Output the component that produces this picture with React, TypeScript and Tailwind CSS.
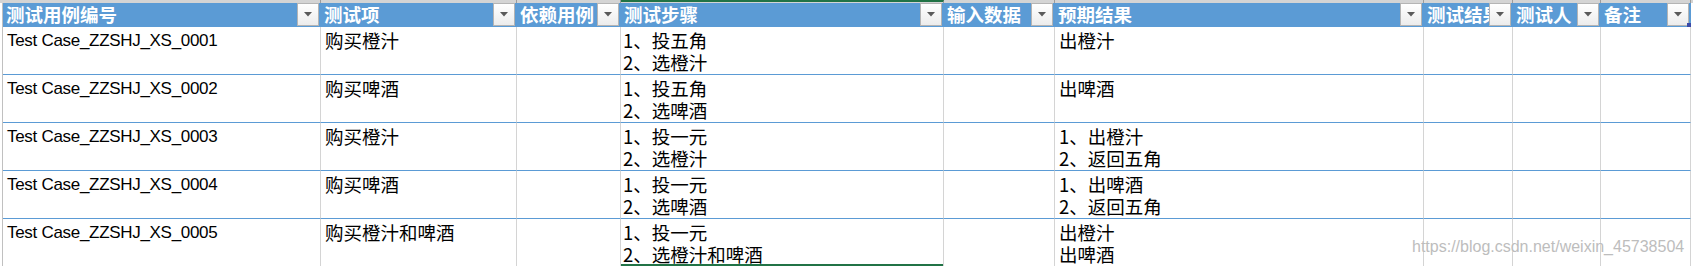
import React from "react";

const WIDTHS = [318, 196, 104, 323, 111, 369, 89, 88, 90];
const HEADERS = ["测试用例编号", "测试项", "依赖用例", "测试步骤", "输入数据", "预期结果", "测试结果", "测试人", "备注"];

type Row = { id: string; item: string; steps: string[]; expect: string[] };
const ROWS: Row[] = [
  { id: "Test Case_ZZSHJ_XS_0001", item: "购买橙汁", steps: ["1、投五角", "2、选橙汁"], expect: ["出橙汁"] },
  { id: "Test Case_ZZSHJ_XS_0002", item: "购买啤酒", steps: ["1、投五角", "2、选啤酒"], expect: ["出啤酒"] },
  { id: "Test Case_ZZSHJ_XS_0003", item: "购买橙汁", steps: ["1、投一元", "2、选橙汁"], expect: ["1、出橙汁", "2、返回五角"] },
  { id: "Test Case_ZZSHJ_XS_0004", item: "购买啤酒", steps: ["1、投一元", "2、选啤酒"], expect: ["1、出啤酒", "2、返回五角"] },
  { id: "Test Case_ZZSHJ_XS_0005", item: "购买橙汁和啤酒", steps: ["1、投一元", "2、选橙汁和啤酒"], expect: ["出橙汁", "出啤酒"] },
];

function FilterButton({ last }: { last?: boolean }) {
  return (
    <div className="relative z-10 shrink-0 w-[22px] h-[23px] mr-[2px] border border-[#b4b4b4] bg-gradient-to-b from-[#ffffff] to-[#ececec] flex items-center justify-center">
      <svg width="8" height="5" viewBox="0 0 8 5">
        <polygon points="0,0 8,0 4,4.5" fill="#5a5a5a" />
      </svg>
      {last && <div className="absolute right-[-3px] bottom-[-2px] w-[4px] h-[4px] bg-[#3b4aa8]" />}
    </div>
  );
}

function Lines({ lines }: { lines: string[] }) {
  return (
    <>
      {lines.map((l, i) => (
        <div key={i} className="whitespace-nowrap">{l}</div>
      ))}
    </>
  );
}

export default function App() {
  const cjk = "font-['Noto_Sans_CJK_SC','Noto_Sans_CJK_JP',sans-serif]";
  return (
    <div className="relative w-[1693px] h-[266px] overflow-hidden bg-white text-black">
      {/* top strip (bottom of sheet column headers) */}
      <div className="flex h-[3px] bg-[#d4d4d4]">
        <div className="w-[3px] shrink-0" />
        {WIDTHS.map((w, i) => (
          <div
            key={i}
            style={{ width: w }}
            className={`shrink-0 h-full border-r border-[#9c9c9c] ${i === 3 ? "border-t-2 border-t-[#217346]" : ""}`}
          />
        ))}
      </div>

      {/* header row */}
      <div className={`flex h-[24px] ${cjk}`}>
        <div className="w-[3px] shrink-0 bg-white border-r border-[#c0c0c0]" />
        {HEADERS.map((h, i) => (
          <div key={i} style={{ width: WIDTHS[i] }} className="shrink-0 flex items-start bg-[#5b9bd5]">
            <div className="flex-1 min-w-0 overflow-x-clip whitespace-nowrap pl-[3px] text-[18.5px] leading-[23px] font-bold text-white">
              {h}
            </div>
            <FilterButton last={i === HEADERS.length - 1} />
          </div>
        ))}
      </div>

      {/* body rows */}
      {ROWS.map((r, ri) => {
        const isLast = ri === ROWS.length - 1;
        const rowH = isLast ? "h-[47px]" : "h-[48px]";
        const cells: React.ReactNode[] = [
          <div className="font-['Liberation_Sans',Arial,sans-serif] text-[17px] tracking-[-0.3px] leading-[22px] pl-[4px] pt-[3px] whitespace-nowrap">
            {r.id}
          </div>,
          <div className={`${cjk} text-[18.5px] leading-[22px] pl-[4px] pt-[2px] whitespace-nowrap`}>{r.item}</div>,
          null,
          <div className={`${cjk} text-[18.5px] leading-[22px] pl-[2px] pt-[2px]`}>
            <Lines lines={r.steps} />
          </div>,
          null,
          <div className={`${cjk} text-[18.5px] leading-[22px] pl-[4px] pt-[2px]`}>
            <Lines lines={r.expect} />
          </div>,
          null,
          null,
          null,
        ];
        return (
          <div key={ri} className={`flex ${rowH}`}>
            <div className="w-[3px] shrink-0 bg-white border-r border-[#c0c0c0]" />
            {WIDTHS.map((w, ci) => (
              <div
                key={ci}
                style={{ width: w }}
                className={`relative shrink-0 overflow-hidden border-r border-[#d4d4d4] ${isLast ? "" : "border-b border-b-[#5b9bd5]"}`}
              >
                {cells[ci]}
                {isLast && ci === 3 && (
                  <div className="absolute left-[-2px] right-[-1px] bottom-0 h-[2px] bg-[#217346]" />
                )}
              </div>
            ))}
          </div>
        );
      })}

      {/* watermark */}
      <div className="absolute left-[1412px] top-[237px] font-['Liberation_Sans',Arial,sans-serif] text-[16px] leading-[20px] text-[#bdbdbd] whitespace-nowrap [text-shadow:0_0_1px_rgba(255,255,255,0.9)]">
        https://blog.csdn.net/weixin_45738504
      </div>
    </div>
  );
}
